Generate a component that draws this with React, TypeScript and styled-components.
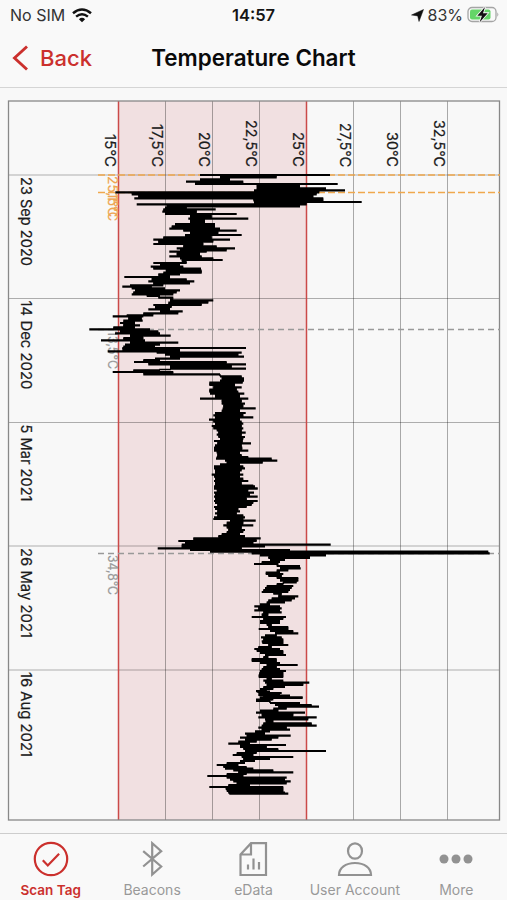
import React from "react";
import styled, { createGlobalStyle } from "styled-components";

const GlobalStyle = createGlobalStyle`
  * { box-sizing: border-box; }
  body { margin: 0; background: #f9f9f9; }
`;

const RED = "#cb302d";
const GREY = "#929292";

const Screen = styled.div`
  width: 507px;
  height: 900px;
  display: flex;
  flex-direction: column;
  overflow: hidden;
  background: #f9f9f9;
  color: #0a0a0a;
  font-family: Inter, "Liberation Sans", sans-serif;
`;

const StatusBar = styled.div`
  height: 30px;
  flex: none;
  display: grid;
  grid-template-columns: 1fr auto 1fr;
  align-items: center;
  padding: 0 8px 0 10px;
  font-family: Inter, sans-serif;
  font-size: 16px;
  line-height: 30px;
  color: #333;
`;

const StatusGroup = styled.div<{ $end?: boolean }>`
  display: flex;
  align-items: center;
  gap: ${(p) => (p.$end ? "4px" : "7px")};
  justify-content: ${(p) => (p.$end ? "flex-end" : "flex-start")};
`;

const Clock = styled.div`
  font-weight: 600;
  font-size: 16.5px;
  color: #151515;
  margin-left: -2px;
`;

const NavBar = styled.header`
  height: 58px;
  flex: none;
  display: grid;
  grid-template-columns: 1fr auto 1fr;
  align-items: center;
  padding: 0 12px 2px;
  border-bottom: 1px solid #d5d5d5;
`;

const BackButton = styled.button`
  display: flex;
  align-items: center;
  gap: 11px;
  padding: 0;
  border: 0;
  background: none;
  color: ${RED};
  font: 500 22px/28px Inter, sans-serif;
`;

const Title = styled.h1`
  margin: 0;
  font-size: 22.4px;
  line-height: 28px;
  font-weight: 600;
  white-space: nowrap;
`;

const ChartArea = styled.main`
  flex: 1;
  min-height: 0;
  background: #f8f8f8;
  svg { display: block; }
`;

const TabBar = styled.nav`
  height: 67px;
  flex: none;
  display: grid;
  grid-template-columns: repeat(5, 1fr);
  border-top: 1px solid #cdcdcd;
  background: #f9f9f9;
`;

const Tab = styled.div<{ $active?: boolean }>`
  display: flex;
  flex-direction: column;
  align-items: center;
  padding-top: 7px;
  color: ${(p) => (p.$active ? RED : GREY)};
`;

const TabLabel = styled.span<{ $active?: boolean }>`
  margin-top: 4px;
  font-size: ${(p) => (p.$active ? 13.5 : 14)}px;
  line-height: 18px;
  font-weight: ${(p) => (p.$active ? 600 : 400)};
  color: ${(p) => (p.$active ? RED : "#999")};
  white-space: nowrap;
`;

const AxisText = styled.text<{ $tone?: string; $small?: boolean }>`
  font-family: Inter, sans-serif;
  font-size: ${(p) => (p.$small ? 12.5 : 15)}px;
  fill: ${(p) => p.$tone || "#1c1c1c"};
  stroke: ${(p) => p.$tone || "#1c1c1c"};
  stroke-width: 0.2px;
`;

/* Trace rows are [time, min, max], three units per pixel, relative to each block's origin. */
type Row = [number, number, number];
type Block = { x: number; y: number; rows: Row[] };

const TRACE: Block[] = [
  { x: 80, y: 95, rows: [
    [240,360,750],[247,420,590],[253,360,450],[260,318,490],[267,345,773],[273,530,660],[280,530,738],
    [286,522,795],[292,106,718],[298,155,710],[304,175,700],[310,163,730],[316,520,730],[321,522,845],
    [328,170,680],[334,260,660]] },
  { x: 80, y: 200, rows: [
    [23,255,320],[28,250,407],[35,247,350],[42,255,470],[49,330,395],[56,325,505],[64,330,375],[72,285,405],[79,275,405],
    [86,268,420],[92,310,470],[98,330,415],[105,315,485],[112,250,395],[119,220,450],[125,235,400],[132,220,370],
    [139,310,410],[145,290,465],[151,300,440],[155,268,380],[162,290,360],[169,268,365],[175,300,400],[180,305,428],
    [189,220,320],[194,240,300],[200,212,310],[206,220,363],[212,258,365],[218,250,365],[223,235,300],[231,133,270],
    [238,215,320],[244,205,343],[250,220,330],[256,150,250],[260,127,215],[265,155,255],[271,165,300],[277,160,290],
    [283,155,280],[288,200,240],[293,235,280],[301,270,400],[308,265,385],[315,220,365],[321,225,275],[328,205,270],
    [334,240,308],[340,190,295],[346,140,220],[349,98,190],[355,145,185],[362,130,188],[369,120,165],[376,130,180],
    [382,100,165],[388,28,210],[394,120,235],[400,105,240],[407,150,272],[414,130,190],[421,63,195],[428,150,295],
    [434,135,240],[440,130,225],[444,127,498],[454,83,300],[458,230,485],[464,255,475],[470,270,492],
    [476,225,300],[480,190,240],[486,162,440],[493,205,498],[499,270,455],[506,270,498],[511,160,240],[516,98,280],[523,190,420]] },
  { x: 80, y: 365, rows: [
    [34,420,485],[40,425,492],[47,420,492],[53,388,488],[60,388,465],[67,400,485],[74,388,470],[80,388,475],
    [86,390,493],[93,405,480],[101,360,505],[108,425,485],[116,425,495],[123,430,490],[130,428,527],[137,425,480],
    [144,405,497],[151,400,490],[157,405,520],[164,387,480],[170,400,485],[176,405,490],[183,395,485],[190,400,490],
    [196,410,485],[203,415,497],[209,410,485],[216,415,495],[222,420,490],[228,402,488],[235,412,513],[241,405,485],
    [248,402,487],[257,402,505],[263,410,480],[270,412,485],[276,410,505],[281,408,575],[287,435,592],[293,440,548],
    [298,420,480],[304,402,490],[310,402,495],[316,405,485],[322,405,480],[329,395,490],[335,402,480],[341,405,490],
    [348,402,505],[355,405,485],[362,405,520],[371,402,533],[378,412,487],[385,408,510]] },
  { x: 80, y: 485, rows: [
    [4,402,525],[10,402,533],[16,410,505],[23,402,522],[29,405,510],[35,402,533],[42,405,500],[48,402,533],
    [54,405,520],[60,412,515],[66,402,500],[72,405,475],[79,412,480],[85,405,470],[91,412,490],[97,402,495],
    [102,400,490],[107,450,527],[113,440,490],[121,430,520],[128,440,485],[135,445,495],[141,440,490],[147,425,480],
    [153,415,495],[160,340,542],[168,295,530],[173,315,520],[179,305,752],[184,305,555],[190,233,485],[195,330,630],
    [200,390,1225],[205,515,1229],[211,540,738],[219,565,690],[225,570,615],[231,545,600],[237,522,595],[243,590,660],
    [250,600,662],[256,590,625],[263,557,600]] },
  { x: 200, y: 570, rows: [
    [12,197,250],[18,205,245],[24,230,295],[32,240,295],[37,250,290],[42,230,250],[48,200,280],[54,195,275],
    [60,190,270],[66,185,265],[71,220,245],[79,235,295],[85,215,285],[91,205,275],[97,200,255],[103,180,210],
    [109,163,240],[115,175,245],[121,163,240],[127,190,245],[133,185,205],[141,155,258],[147,190,250],[153,180,240],
    [159,180,240],[165,200,215],[171,205,265],[177,176,265],[183,210,280],[190,225,295],[196,195,230],[202,183,245],
    [208,190,250],[214,185,250],[219,187,250],[225,205,265],[231,175,215],[237,163,240],[243,170,250],[249,180,250],
    [255,195,258],[261,190,205],[267,155,230],[273,155,230],[279,180,240],[285,200,293],[291,190,230],[297,185,240],
    [303,180,258],[309,178,250],[315,176,250],[321,176,250],[327,200,215],[332,190,250],[338,195,328],[345,200,310],
    [351,190,255],[357,180,220],[363,168,200],[369,175,245],[375,175,240],[380,190,270],[384,180,308]] },
  { x: 190, y: 690, rows: [
    [29,198,245],[5,200,240],[11,210,270],[17,210,300],[22,220,338],[28,235,250],[33,198,240],[39,240,330],[45,255,365],
    [50,265,387],[56,250,290],[62,210,265],[68,198,345],[74,215,310],[82,205,380],[88,225,355],[94,227,250],
    [100,220,365],[107,215,380],[113,205,290],[119,215,300],[124,195,240],[131,165,225],[137,170,302],[143,150,265],
    [149,165,245],[155,145,200],[161,115,180],[165,150,288],[171,150,230],[177,160,265],[183,165,408],[189,140,200],
    [195,128,190],[201,155,310],[207,160,240],[213,150,195],[219,110,165],[225,80,145],[231,100,170],[236,105,190],
    [241,130,250],[247,145,310],[252,110,170],[258,52,160],[263,110,290],[269,120,285],[274,130,302],[280,140,290],
    [285,115,180],[291,58,280],[297,107,280],[303,110,280],[308,115,285],[311,118,295]] },
];

const SAMPLES = TRACE.flatMap(({ x, y, rows }) =>
  rows.map(([t, lo, hi]) => ({ y: y + t / 3, lo: x + lo / 3, hi: x + hi / 3 }))
).sort((a, b) => a.y - b.y);

const tracePath = SAMPLES.map((s) => `M${s.lo.toFixed(1)} ${s.y.toFixed(1)}H${s.hi.toFixed(1)}`).join("");

/* Solid body of the trace: the range that each pair of neighbouring samples shares. */
const bodyPath = SAMPLES.slice(1).map((s, i) => {
  const prev = SAMPLES[i];
  const lo = Math.max(s.lo, prev.lo);
  const hi = Math.min(s.hi, prev.hi);
  const left = hi > lo ? lo : hi - 0.8;
  const right = hi > lo ? hi : lo + 0.8;
  return `M${left.toFixed(1)} ${prev.y.toFixed(1)}H${right.toFixed(1)}V${s.y.toFixed(1)}H${left.toFixed(1)}Z`;
}).join("");

const TEMPS = [
  { label: "15°C", x: 118.5, len: 33 },
  { label: "17,5°C", x: 165.5, len: 43 },
  { label: "20°C", x: 212.5, len: 35 },
  { label: "22,5°C", x: 259.5, len: 47 },
  { label: "25°C", x: 306.5, len: 35 },
  { label: "27,5°C", x: 353.5, len: 44 },
  { label: "30°C", x: 400.5, len: 35 },
  { label: "32,5°C", x: 447.5, len: 47 },
];

const DATES = [
  { label: "23 Sep 2020", y: 175, len: 89 },
  { label: "14 Dec 2020", y: 298.5, len: 89 },
  { label: "5 Mar 2021", y: 422.5, len: 77 },
  { label: "26 May 2021", y: 546, len: 90 },
  { label: "16 Aug 2021", y: 670, len: 85 },
];

function Turned({ x, y, len, label, end, tone, small }: {
  x: number; y: number; len: number; label: string; end?: boolean; tone?: string; small?: boolean;
}) {
  return (
    <AxisText
      $tone={tone}
      $small={small}
      transform={`translate(${x} ${y}) rotate(90)`}
      textAnchor={end ? "end" : "start"}
      textLength={len}
      lengthAdjust="spacingAndGlyphs"
    >
      {label}
    </AxisText>
  );
}

function TemperatureChart() {
  return (
    <svg width="507" height="745" viewBox="0 88 507 745">
      <rect x="8.5" y="101" width="491" height="719" fill="#f8f8f8" />
      <rect x="118.5" y="101" width="188" height="719" fill="#f1e0e1" />
      {TEMPS.map((t) => (
        <path key={t.label} d={`M${t.x} 101V820`} stroke="#000" strokeOpacity=".32" />
      ))}
      {DATES.map((d) => (
        <path key={d.label} d={`M8 ${d.y}H500`} stroke="#000" strokeOpacity=".3" />
      ))}
      <path d="M118.5 101V820M306.5 101V820" stroke="#cb4a49" strokeWidth="1.5" />
      <rect x="8.5" y="101" width="491" height="719" fill="none" stroke="#888" strokeWidth="1.3" />
      <path d="M98 175H500M98 192.5H500" stroke="#f0a84c" strokeWidth="1.4" strokeDasharray="7 3" />
      <path d="M98 329.5H500M98 553.5H500" stroke="#999" strokeWidth="1.4" strokeDasharray="6 4" />
      <Turned x={107.5} y={176} len={41} label="25,1°C" tone="#eea550" small />
      <Turned x={107.5} y={193} len={28} label="15°C" tone="#eea550" small />
      <Turned x={107.5} y={331} len={38} label="13,5°C" tone="#999" small />
      <Turned x={107.5} y={555} len={40} label="34,8°C" tone="#999" small />
      <path d={bodyPath} fill="#000" />
      <path d={tracePath} fill="none" stroke="#000" strokeWidth="2.2" />
      {TEMPS.map((t) => (
        <Turned key={t.label} x={t.x - 13.2} y={167} len={t.len} label={t.label} end />
      ))}
      {DATES.map((d) => (
        <Turned key={d.label} x={21.3} y={d.y + 2} len={d.len} label={d.label} />
      ))}
    </svg>
  );
}

const WifiIcon = () => (
  <svg width="20" height="15" viewBox="0 0 20 15" fill="none" stroke="#111" strokeWidth="2.5">
    <path d="M1 5.3Q10-2.3 19 5.3M4.1 8.6Q10 3.8 15.9 8.6" />
    <path d="M6.9 11.2Q10 8.5 13.1 11.2L10 14.3Z" fill="#111" stroke="none" />
  </svg>
);

const ArrowIcon = () => (
  <svg width="13" height="13" viewBox="0 0 13 13">
    <path d="M12.5.5 8 12.5 6.7 6.9.5 6Z" fill="#111" stroke="#111" strokeWidth=".5" />
  </svg>
);

const BatteryIcon = () => (
  <svg width="32" height="18" viewBox="0 0 32 18">
    <rect x="1" y="1.5" width="28" height="14" rx="4" fill="#f9f9f9" stroke="#a5a5a5" strokeWidth="1.3" />
    <rect x="3" y="3.5" width="20.5" height="10" rx="2" fill="#64d568" />
    <path d="M30.3 6.2q2 2.3 0 4.6z" fill="#a5a5a5" />
    <path d="M18 1 10.3 9.7h4.6L12.5 16.5 20.7 7.2H16z" fill="#111" stroke="#f9f9f9" strokeWidth="1.7" paintOrder="stroke" />
  </svg>
);

const TAB_ICONS = {
  scan: (
    <>
      <circle cx="18" cy="18" r="16.2" />
      <path d="m9.8 19.2 5 5.2 11.3-11.7" />
    </>
  ),
  beacon: <path d="m9.2 10.2 18 15.3-9 8V2.2l9 8L9.2 25.5" />,
  data: (
    <>
      <path d="M5.5 13.5 16 2.2h15V34H5.5zM16 2.2v11.3H5.5M13 23.5v5M18.5 17.5v11M24 21v7.5" />
    </>
  ),
  user: (
    <>
      <ellipse cx="18" cy="10" rx="7" ry="7.7" />
      <path d="M2 34c0-7 6.5-12 16-12s16 5 16 12z" />
    </>
  ),
  more: (
    <g fill="currentColor" stroke="none">
      <circle cx="6" cy="18" r="4.5" />
      <circle cx="18" cy="18" r="4.5" />
      <circle cx="30" cy="18" r="4.5" />
    </g>
  ),
};

const TABS: { label: string; icon: keyof typeof TAB_ICONS; active?: boolean }[] = [
  { label: "Scan Tag", icon: "scan", active: true },
  { label: "Beacons", icon: "beacon" },
  { label: "eData", icon: "data" },
  { label: "User Account", icon: "user" },
  { label: "More", icon: "more" },
];

export default function App() {
  return (
    <Screen>
      <GlobalStyle />
      <StatusBar>
        <StatusGroup>
          No SIM
          <WifiIcon />
        </StatusGroup>
        <Clock>14:57</Clock>
        <StatusGroup $end>
          <ArrowIcon />
          83%
          <BatteryIcon />
        </StatusGroup>
      </StatusBar>
      <NavBar>
        <BackButton>
          <svg width="17" height="26" viewBox="0 0 17 26" fill="none" stroke="currentColor" strokeWidth="2.9">
            <path d="M15 1.5 2.5 13 15 24.5" />
          </svg>
          Back
        </BackButton>
        <Title>Temperature Chart</Title>
      </NavBar>
      <ChartArea>
        <TemperatureChart />
      </ChartArea>
      <TabBar>
        {TABS.map((tab) => (
          <Tab key={tab.label} $active={tab.active}>
            <svg width="36" height="36" viewBox="0 0 36 36" fill="none" stroke="currentColor" strokeWidth="2.2">
              {TAB_ICONS[tab.icon]}
            </svg>
            <TabLabel $active={tab.active}>{tab.label}</TabLabel>
          </Tab>
        ))}
      </TabBar>
    </Screen>
  );
}
